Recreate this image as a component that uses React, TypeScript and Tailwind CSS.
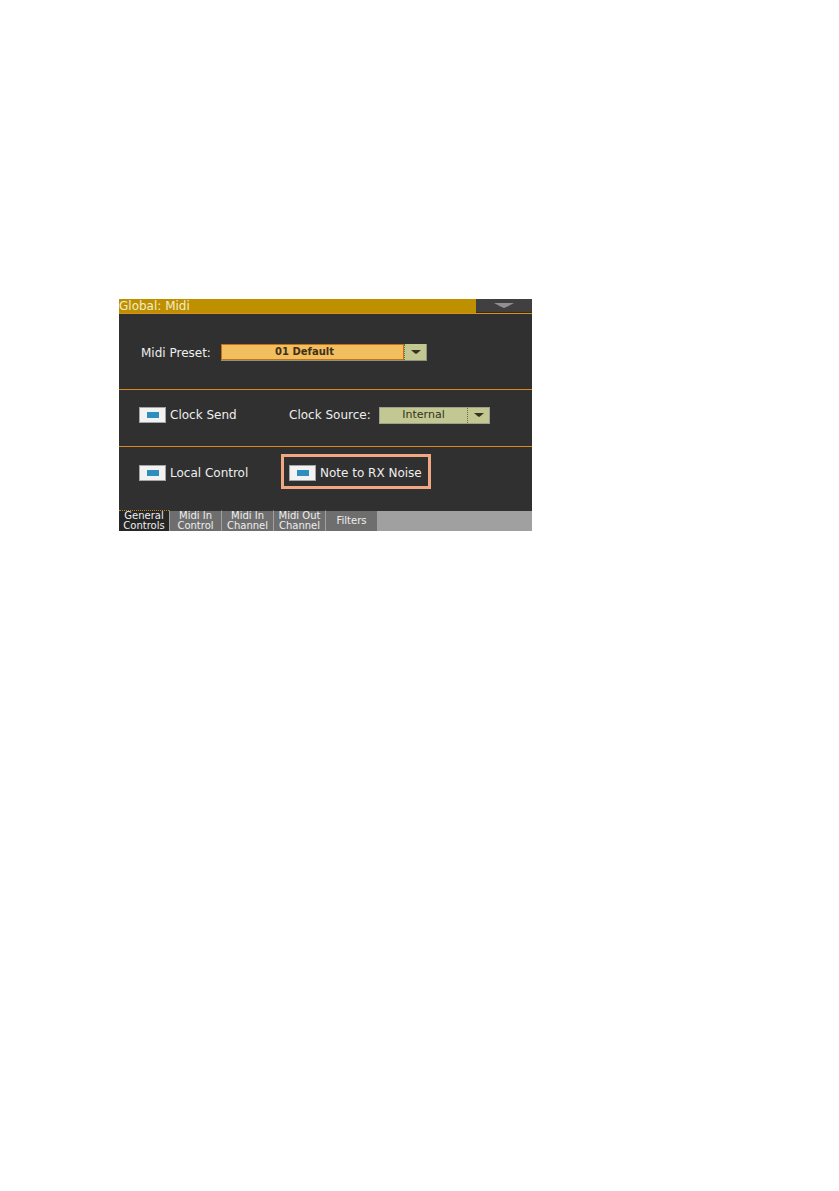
import { useState } from 'react';

const tabs = [
  ['General', 'Controls'],
  ['Midi In', 'Control'],
  ['Midi In', 'Channel'],
  ['Midi Out', 'Channel'],
  ['Filters'],
];

function Arrow({ className }: { className: string }) {
  return (
    <svg viewBox="0 0 20 6" preserveAspectRatio="none" className={className} aria-hidden="true">
      <path d="M0 0H20L13 4.5L10 6L7 4.5Z" fill="currentColor" />
    </svg>
  );
}

function Toggle({ label }: { label: string }) {
  const [on, setOn] = useState(true);

  return (
    <label className="flex items-center gap-1 whitespace-nowrap">
      <input
        type="checkbox"
        checked={on}
        onChange={(e) => setOn(e.target.checked)}
        className="h-4 w-[27px] shrink-0 appearance-none border border-[#a5a5a5] bg-[#f2f2f2] bg-[length:12px_6px] bg-center bg-no-repeat checked:bg-[linear-gradient(#2e8fbe,#2e8fbe)]"
      />
      {label}
    </label>
  );
}

export default function App() {
  const [active, setActive] = useState(0);

  return (
    <main className="min-h-screen bg-white pt-[299px] pl-[119px]">
      <div className="w-full max-w-[413px] bg-[#303030] font-['DejaVu_Sans',sans-serif] text-[12px] leading-4 text-[#eeeeee]">
        <header className="flex h-[15px] border-b border-[#d99020] bg-[#be9000]">
          <h1 className="flex-1 leading-[14px] text-[#f4ecc8]">Global: Midi</h1>
          <button aria-label="Page menu" className="flex w-14 justify-center border-b border-[#3a2a18] bg-[#404040] pt-1 text-[#909090]">
            <Arrow className="h-[5px] w-5" />
          </button>
        </header>

        <section className="flex h-[76px] items-center gap-1 border-b border-[#d98a1e] pt-[2px] pl-[22px]">
          <label htmlFor="preset" className="w-[76px] whitespace-nowrap">Midi Preset:</label>
          <div className="relative flex h-[17px] w-[206px] border-r border-b border-[#8f9480] bg-[#c3c791]">
            <select
              id="preset"
              className="w-full appearance-none border-r-[22px] border-[#c3c791] bg-[#f2bf60] pr-4 text-center text-[10px] leading-3 font-bold text-[#40301a] [text-align-last:center]"
            >
              <option>01 Default</option>
            </select>
            <span className="pointer-events-none absolute inset-y-0 left-0 w-[183px] border border-[#c96f14]" />
            <span className="pointer-events-none absolute inset-y-0 right-0 flex w-[22px] items-center justify-center border-l border-dotted border-[#6b6a40] text-[#34331c]">
              <Arrow className="h-1 w-[10px]" />
            </span>
          </div>
        </section>

        <section className="flex h-[57px] items-center border-b border-[#d98a1e] pb-[6px] pl-5">
          <div className="w-[150px]">
            <Toggle label="Clock Send" />
          </div>
          <label htmlFor="source" className="w-[90px] whitespace-nowrap">Clock Source:</label>
          <div className="relative flex h-[17px] w-[111px] border border-[#9da08a] bg-[#c3c791]">
            <select
              id="source"
              className="w-full appearance-none pr-[22px] text-center text-[11px] leading-3 text-[#34331c] [text-align-last:center]"
            >
              <option>Internal</option>
            </select>
            <span className="pointer-events-none absolute inset-y-0 right-0 flex w-[22px] items-center justify-center border-l border-dotted border-[#6b6a40] text-[#34331c]">
              <Arrow className="h-1 w-[10px]" />
            </span>
          </div>
        </section>

        <section className="flex h-[63px] items-start pt-[7px] pl-5">
          <div className="flex h-[35px] w-[142px] items-center pt-[2px]">
            <Toggle label="Local Control" />
          </div>
          <div className="flex h-[35px] w-[150px] items-center border-3 border-[#f0a883] pt-[2px] pl-[5px]">
            <Toggle label="Note to RX Noise" />
          </div>
        </section>

        <nav className="flex text-[10px] leading-[10px]">
          {tabs.map((lines, i) => (
            <button
              key={i}
              onClick={() => setActive(i)}
              className={`flex h-[21px] flex-col items-center justify-center whitespace-nowrap ${
                i === active
                  ? 'w-[50px] border-t border-dotted border-[#c08a20] bg-[#262626]'
                  : 'w-[52px] border-t border-l border-t-[#303030] border-l-[#a0a0a0] bg-[#6e6e6e]'
              }`}
            >
              {lines.map((line) => (
                <span key={line}>{line}</span>
              ))}
            </button>
          ))}
          <div className="flex-1 border-t border-[#303030] bg-[#a0a0a0]" />
        </nav>
      </div>
    </main>
  );
}
